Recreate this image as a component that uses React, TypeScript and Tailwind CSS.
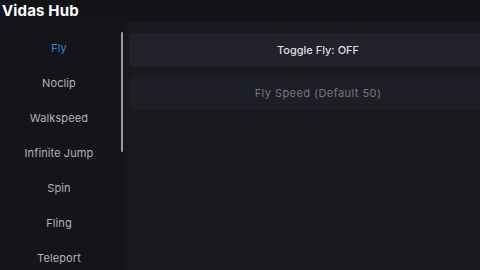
const tabs = ["Fly", "Noclip", "Walkspeed", "Infinite Jump", "Spin", "Fling", "Teleport"];

export default function App() {
  return (
    <div className="flex h-[270px] w-[480px] flex-col overflow-hidden bg-[#131319] font-['Inter',sans-serif]">
      <div className="flex h-[22px] shrink-0 items-center px-[2px]">
        <span className="text-[15px] font-bold tracking-[0.01em] text-white">Vidas Hub</span>
      </div>
      <div className="flex flex-1">
        <div className="relative w-[125px] shrink-0 bg-[#141419]">
          <div className="flex flex-col pt-[9px]">
            {tabs.map((t, i) => (
              <div key={t} className="flex h-[35px] w-[118px] items-center justify-center">
                <span
                  className={`text-[11px] tracking-[0.01em] ${i === 0 ? "text-[#1c8fdb]" : "text-[#b3b3b8]"}`}
                >
                  {t}
                </span>
              </div>
            ))}
          </div>
          <div className="absolute left-[121px] top-[10px] h-[120px] w-[2px] rounded-full bg-[#9a9aa0]" />
        </div>
        <div className="flex min-w-0 flex-1 flex-col gap-[9px] overflow-hidden bg-[#18181f] pl-[4px] pt-[11px]">
          <div className="flex h-[34px] w-[378px] shrink-0 items-center justify-center rounded-[5px] bg-[#22222b]">
            <span className="text-[11px] font-medium text-[#dcdce0]">Toggle Fly: OFF</span>
          </div>
          <div className="flex h-[34px] w-[378px] shrink-0 items-center justify-center rounded-[5px] bg-[#1e1e26]">
            <span className="text-[11px] tracking-[0.04em] text-[#76767d]">Fly Speed (Default 50)</span>
          </div>
        </div>
      </div>
    </div>
  );
}
